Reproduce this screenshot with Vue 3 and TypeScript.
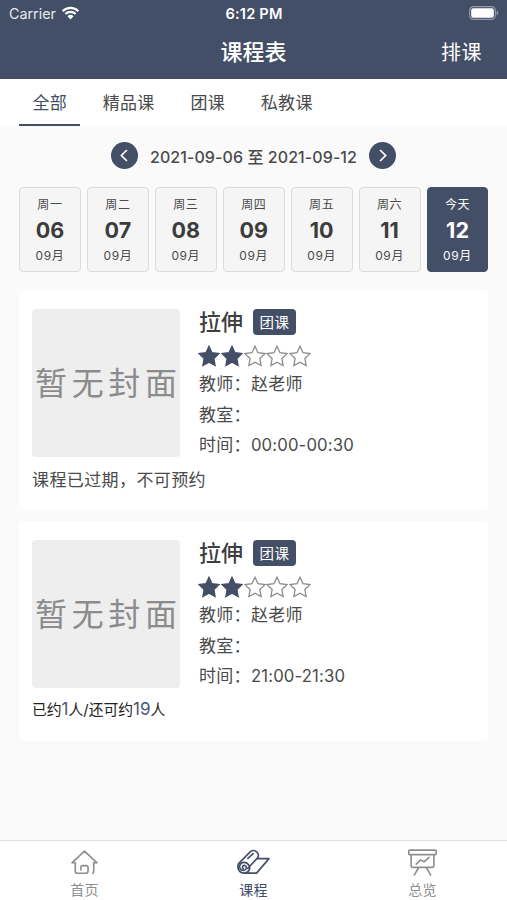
<script setup lang="ts">
import { ref } from 'vue'

interface Day { week: string; date: string; month: string }
interface Course {
  id: number
  title: string
  tag: string
  stars: number
  teacher: string
  room: string
  time: string
  booked?: number
  left?: number
}

const tabs: string[] = ['全部', '精品课', '团课', '私教课']
const activeTab = ref(0)
const activeDay = ref(6)

const days: Day[] = ['周一', '周二', '周三', '周四', '周五', '周六', '今天'].map((week, i) => ({
  week,
  date: String(i + 6).padStart(2, '0'),
  month: '09月',
}))

const courses: Course[] = [
  { id: 1, title: '拉伸', tag: '团课', stars: 2, teacher: '赵老师', room: '', time: '00:00-00:30' },
  { id: 2, title: '拉伸', tag: '团课', stars: 2, teacher: '赵老师', room: '', time: '21:00-21:30', booked: 1, left: 19 },
]
</script>

<template>
  <div class="screen">
    <header class="top">
      <div class="status">
        <div class="carrier">
          <span>Carrier</span>
          <svg class="wifi" viewBox="0 0 18 14">
            <path d="M1.2 5.2a11 11 0 0 1 15.6 0" />
            <path d="M3.9 8a7.2 7.2 0 0 1 10.2 0" />
            <path class="dot" d="M9 13.4 6 10.3a4.3 4.3 0 0 1 6 0z" />
          </svg>
        </div>
        <span class="clock">6:12 PM</span>
        <svg class="battery" viewBox="0 0 30 14">
          <rect class="shell" x=".7" y=".7" width="25.6" height="12.6" rx="3.6" />
          <rect class="charge" x="2.2" y="2.2" width="22.6" height="9.6" rx="2" />
          <path class="cap" d="M27.6 4.6c2.4.8 2.4 4 0 4.8z" />
        </svg>
      </div>
      <div class="nav">
        <h1>课程表</h1>
        <span class="action">排课</span>
      </div>
    </header>

    <nav class="tabs">
      <span v-for="(t, i) in tabs" :key="t" class="tab" :class="{ active: i === activeTab }" @click="activeTab = i">{{ t }}</span>
    </nav>

    <div class="range">
      <span class="arrow"><svg viewBox="0 0 28 28"><path d="M16.5 8.3 10.8 14l5.7 5.7" /></svg></span>
      <span class="dates">2021-09-06 至 2021-09-12</span>
      <span class="arrow"><svg viewBox="0 0 28 28"><path d="M11.5 8.3 17.2 14l-5.7 5.7" /></svg></span>
    </div>

    <div class="days">
      <div v-for="(d, i) in days" :key="d.date" class="day" :class="{ active: i === activeDay }" @click="activeDay = i">
        <span class="week">{{ d.week }}</span>
        <b>{{ d.date }}</b>
        <span class="month">{{ d.month }}</span>
      </div>
    </div>

    <main class="list">
      <article v-for="c in courses" :key="c.id" class="card">
        <div class="body">
          <div class="cover"><span>暂无封面</span></div>
          <div class="info">
            <div class="heading"><h2>{{ c.title }}</h2><span class="tag">{{ c.tag }}</span></div>
            <div class="stars">
              <svg v-for="n in 5" :key="n" :class="{ full: n <= c.stars }" viewBox="0 0 22 22">
                <path d="M11 1.2 14 7.7 21 8.6 15.9 13.5 17.1 20.6 11 17.2 4.9 20.6 6.1 13.5 1 8.6 8 7.7z" />
              </svg>
            </div>
            <p>教师：<span>{{ c.teacher }}</span></p>
            <p>教室：<span>{{ c.room }}</span></p>
            <p>时间：<span class="time">{{ c.time }}</span></p>
          </div>
        </div>
        <div v-if="c.booked" class="foot booking">已约<em>{{ c.booked }}</em>人/还可约<em>{{ c.left }}</em>人</div>
        <div v-else class="foot">课程已过期，不可预约</div>
      </article>
    </main>

    <footer class="tabbar">
      <div class="item">
        <svg viewBox="0 0 32 28">
          <path d="M3 14.3 16 2.2l13 12.1M3 14.3h3.4v8.4q0 2.5 2.5 2.5h8.6q2.2 0 2.2-2.3v-3.6q0-2-2-2h-3.4q-2 0-2 2v2.4M29 14.3h-3.4v8q0 2-1 2.9" />
        </svg>
        <span>首页</span>
      </div>
      <div class="item active">
        <svg viewBox="0 0 34 28">
          <path d="M1.5 15.2 13.8 2.7c4.4-3.1 10.2 1.5 7.6 6.3L11 20.2M21.5 10H33L20.2 25H7.3M1.5 15.2c-2.2 5 1.3 9.8 5.8 9.8 5.2 0 7-5.2 4.7-8.5-2.1-3-6.5-3.6-8.6-.7-2.2 3.2.4 6.7 3.6 6.4 3-.3 3.5-4.4 1-5.1-2-.4-3.3 2-1.6 3.3M11.2 9.8l5.4-5" />
        </svg>
        <span>课程</span>
      </div>
      <div class="item">
        <svg viewBox="0 0 32 28">
          <path d="M2.8 1.2h26.4q1 0 1 1v2.6q0 1-1 1H2.8q-1 0-1-1V2.2q0-1 1-1zM4.2 6v11.7q0 1.3 1.3 1.3h21q1.3 0 1.3-1.3V6M12 19.2 7.5 27M20 19.2l4.5 7.8M9.5 15.6l4.5-4.3 3.5 2 5.3-4.7" />
        </svg>
        <span>总览</span>
      </div>
    </footer>
  </div>
</template>

<style>
body { background: #fafafa; }
</style>

<style scoped>
.screen {
  width: 507px; height: 900px; box-sizing: border-box; overflow: hidden;
  display: flex; flex-direction: column; background: #fafafa; color: #4a4a4a;
  font-family: Inter, "Noto Sans CJK SC", sans-serif;
  font-size: 17px; letter-spacing: .3px;
}
h1, h2, p { margin: 0; font-weight: 500; }
.top { height: 79px; flex: none; background: #434e67; color: #fff; }
.status { height: 27px; display: grid; grid-template-columns: 1fr auto 1fr; align-items: center; padding: 0 8px 0 9px; letter-spacing: .2px; }
.carrier { display: flex; align-items: center; gap: 5px; font-size: 14.3px; letter-spacing: 0; color: #e7e9ee; }
.wifi { width: 19px; height: 14px; margin-top: -2px; fill: none; stroke: #fff; stroke-width: 2.2; }
.wifi .dot { fill: #fff; stroke: none; }
.clock { font-size: 14.6px; font-weight: 600; }
.battery { width: 30px; height: 14px; justify-self: end; margin-top: -1px; }
.shell { fill: none; stroke: #9299a8; stroke-width: 1.2; }
.charge { fill: #fff; }
.cap { fill: #9299a8; }
.nav { height: 48px; display: grid; grid-template-columns: 1fr auto 1fr; align-items: center; padding: 0 25px; }
h1 { grid-column: 2; font-size: 22px; letter-spacing: 0; margin-top: -2px; }
.action { justify-self: end; font-size: 20px; letter-spacing: .5px; }
.tabs { height: 47px; flex: none; display: flex; gap: 8.4px; padding: 0 19px; background: #fff; }
.tab { height: 47px; box-sizing: border-box; padding: 0 13.7px; line-height: 48px; border-bottom: 2px solid transparent; letter-spacing: .3px; }
.tab:first-child { margin-right: .3px; padding: 0 13.4px; }
.tab.active { color: #434e67; border-color: #434e67; }
.range { height: 60px; flex: none; display: flex; align-items: center; justify-content: center; gap: 12px; padding-bottom: 1px; box-sizing: border-box; }
.arrow { width: 27px; height: 27px; border-radius: 50%; background: #434e67; }
.arrow svg { display: block; width: 27px; height: 27px; fill: none; stroke: #fff; stroke-width: 1.8; }
.dates { font-size: 16px; white-space: nowrap; font-weight: 500; letter-spacing: .08px; }
.days { flex: none; display: grid; grid-template-columns: repeat(7, 1fr); gap: 6px; padding: 1px 18.5px 0 19px; }
.day { height: 85px; box-sizing: border-box; border: 1px solid #dcdcdc; border-radius: 4px; background: #f5f5f5; display: flex; flex-direction: column; align-items: center; padding-top: 8px; }
.day span { font-size: 12px; line-height: 17.6px; letter-spacing: .6px; }
.day b { font-size: 21.5px; line-height: 33px; font-weight: 700; color: #3c3c3c; letter-spacing: 0; }
.day.active { background: #434e67; border-color: #434e67; }
.day.active span, .day.active b { color: #fff; }
.list { display: flex; flex-direction: column; gap: 11px; padding: 18px 19px 0; }
.card { height: 220px; box-sizing: border-box; padding: 19px 13px 0; background: #fff; border-radius: 3px; }
.body { display: flex; gap: 19px; }
.cover { width: 148px; height: 148px; flex: none; border-radius: 4px; background: #eee; color: #8c8c8c; display: flex; align-items: center; justify-content: center; }
.cover span { font-size: 32px; letter-spacing: 4.7px; line-height: 48px; margin-right: -4.7px; margin-top: 1px; white-space: nowrap; }
.info { flex: 1; }
.heading { height: 26px; display: flex; align-items: center; gap: 10px; }
h2 { font-size: 22px; line-height: 26px; letter-spacing: 0; color: #3f3f3f; }
.tag { width: 43px; height: 26px; border-radius: 4px; background: #434e67; color: #fff; font-size: 14.5px; line-height: 27px; text-align: center; letter-spacing: .6px; }
.stars { display: flex; gap: .7px; height: 22px; margin-top: 10px; margin-bottom: 2px; margin-left: -.6px; }
.stars svg { width: 22px; height: 22px; flex: none; fill: #fff; stroke: #8b8b8b; stroke-width: 1.3; }
.stars .full { fill: #434e67; stroke: #434e67; }
.info p { height: 30.5px; line-height: 30.5px; font-weight: 400; white-space: nowrap; }
.time { font-size: 16.7px; letter-spacing: .15px; }
.foot { margin-top: 4px; line-height: 30px; letter-spacing: .4px; }
.booking { margin-top: 2px; color: #222; font-size: 14.8px; letter-spacing: 0; }
.booking em { font-style: normal; font-size: 17px; color: #4b5575; }
.tabbar { margin-top: auto; height: 60px; flex: none; box-sizing: border-box; border-top: 1px solid #dedede; background: #fff; display: grid; grid-template-columns: repeat(3, 1fr); }
.item { display: flex; flex-direction: column; align-items: center; color: #8e8e8e; font-size: 14px; line-height: 20px; padding-top: 8px; gap: 4px; }
.item svg { width: 33px; height: 27px; fill: none; stroke: currentColor; stroke-width: 1.7; stroke-linejoin: round; stroke-linecap: round; }
.item.active { color: #434e67; }
</style>
